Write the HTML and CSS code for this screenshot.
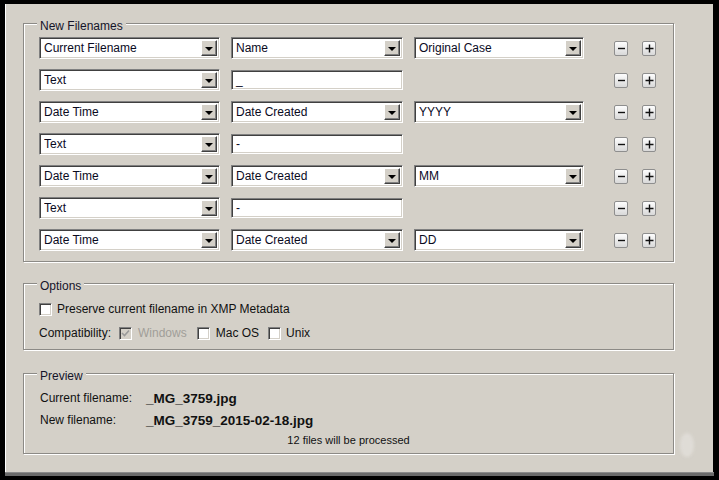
FILE: index.html
```html
<!DOCTYPE html>
<html lang="en">
<head>
  <meta charset="UTF-8">
  <title>Batch Rename</title>
  <link rel="stylesheet" href="styles.css">
</head>
<body>
<div class="window">
  <fieldset class="group names">
    <legend>New Filenames</legend>
    <div class="rows">
      <div class="row">
        <div class="select"><span class="val">Current Filename</span><span class="arrow"></span></div>
        <div class="select"><span class="val">Name</span><span class="arrow"></span></div>
        <div class="select"><span class="val">Original Case</span><span class="arrow"></span></div>
        <button class="mini minus"><svg width="9" height="9"><path d="M1 4.5h7" stroke="#111" stroke-width="1.4"/></svg></button>
        <button class="mini plus"><svg width="9" height="9"><path d="M0.5 4.5h8M4.5 0.5v8" stroke="#111" stroke-width="1.4"/></svg></button>
      </div>
      <div class="row">
        <div class="select"><span class="val">Text</span><span class="arrow"></span></div>
        <div class="input">_</div>
        <div class="blank"></div>
        <button class="mini minus"><svg width="9" height="9"><path d="M1 4.5h7" stroke="#111" stroke-width="1.4"/></svg></button>
        <button class="mini plus"><svg width="9" height="9"><path d="M0.5 4.5h8M4.5 0.5v8" stroke="#111" stroke-width="1.4"/></svg></button>
      </div>
      <div class="row">
        <div class="select"><span class="val">Date Time</span><span class="arrow"></span></div>
        <div class="select"><span class="val">Date Created</span><span class="arrow"></span></div>
        <div class="select"><span class="val">YYYY</span><span class="arrow"></span></div>
        <button class="mini minus"><svg width="9" height="9"><path d="M1 4.5h7" stroke="#111" stroke-width="1.4"/></svg></button>
        <button class="mini plus"><svg width="9" height="9"><path d="M0.5 4.5h8M4.5 0.5v8" stroke="#111" stroke-width="1.4"/></svg></button>
      </div>
      <div class="row">
        <div class="select"><span class="val">Text</span><span class="arrow"></span></div>
        <div class="input">-</div>
        <div class="blank"></div>
        <button class="mini minus"><svg width="9" height="9"><path d="M1 4.5h7" stroke="#111" stroke-width="1.4"/></svg></button>
        <button class="mini plus"><svg width="9" height="9"><path d="M0.5 4.5h8M4.5 0.5v8" stroke="#111" stroke-width="1.4"/></svg></button>
      </div>
      <div class="row">
        <div class="select"><span class="val">Date Time</span><span class="arrow"></span></div>
        <div class="select"><span class="val">Date Created</span><span class="arrow"></span></div>
        <div class="select"><span class="val">MM</span><span class="arrow"></span></div>
        <button class="mini minus"><svg width="9" height="9"><path d="M1 4.5h7" stroke="#111" stroke-width="1.4"/></svg></button>
        <button class="mini plus"><svg width="9" height="9"><path d="M0.5 4.5h8M4.5 0.5v8" stroke="#111" stroke-width="1.4"/></svg></button>
      </div>
      <div class="row">
        <div class="select"><span class="val">Text</span><span class="arrow"></span></div>
        <div class="input">-</div>
        <div class="blank"></div>
        <button class="mini minus"><svg width="9" height="9"><path d="M1 4.5h7" stroke="#111" stroke-width="1.4"/></svg></button>
        <button class="mini plus"><svg width="9" height="9"><path d="M0.5 4.5h8M4.5 0.5v8" stroke="#111" stroke-width="1.4"/></svg></button>
      </div>
      <div class="row">
        <div class="select"><span class="val">Date Time</span><span class="arrow"></span></div>
        <div class="select"><span class="val">Date Created</span><span class="arrow"></span></div>
        <div class="select"><span class="val">DD</span><span class="arrow"></span></div>
        <button class="mini minus"><svg width="9" height="9"><path d="M1 4.5h7" stroke="#111" stroke-width="1.4"/></svg></button>
        <button class="mini plus"><svg width="9" height="9"><path d="M0.5 4.5h8M4.5 0.5v8" stroke="#111" stroke-width="1.4"/></svg></button>
      </div>
    </div>
  </fieldset>

  <fieldset class="group options">
    <legend>Options</legend>
    <div class="opt-line">
      <span class="check first"></span>
      <span>Preserve current filename in XMP Metadata</span>
    </div>
    <div class="opt-line">
      <span class="compat-label">Compatibility:</span>
      <span class="check disabled"><svg width="9" height="9"><path d="M1 4l2.5 2.5L8 1.5" fill="none" stroke="#9a9a9a" stroke-width="1.6"/></svg></span>
      <span class="dim">Windows</span>
      <span class="check"></span>
      <span class="mac">Mac OS</span>
      <span class="check last"></span>
      <span>Unix</span>
    </div>
  </fieldset>

  <fieldset class="group preview">
    <legend>Preview</legend>
    <div class="pv-line"><span class="pv-label">Current filename:</span><b>_MG_3759.jpg</b></div>
    <div class="pv-line"><span class="pv-label">New filename:</span><b>_MG_3759_2015-02-18.jpg</b></div>
    <div class="pv-count">12 files will be processed</div>
  </fieldset>

  <div class="smudge"></div>
</div>
<div class="bottom-edge"></div>
</body>
</html>
```

FILE: styles.css
```css
html, body {
  margin: 0;
  padding: 0;
  background: #000;
  font-family: "Liberation Sans", Arial, sans-serif;
  font-size: 12px;
  color: #111;
}
body {
  width: 719px;
  height: 480px;
  overflow: hidden;
}
.window {
  position: relative;
  box-sizing: border-box;
  margin: 4px 0 0 5px;
  width: 708px;
  height: 468px;
  background: #d4d0c8;
  border-left: 1px solid #fff;
  padding: 9px 0 0 17px;
}
.bottom-edge {
  margin-left: 5px;
  width: 709px;
  height: 3px;
  background: #6a6a6a;
  border-top: 1px solid #8a8a8a;
}

/* etched group boxes */
.group {
  box-sizing: border-box;
  width: 651px;
  margin: 0;
  padding: 0 0 0 15px;
  border: 1px solid #8c8a86;
  box-shadow: inset 1px 1px 0 #fff, 1px 1px 0 #fff;
}
.group legend {
  margin-left: -2px;
  padding: 6px 3px 0;
  line-height: 14px;
  background: linear-gradient(transparent 9px, #d4d0c8 9px);
  color: #14142a;
}
.names { padding-top: 4px; padding-bottom: 10px; }
.options { margin-top: 11px; padding-top: 8px; padding-bottom: 8px; }
.preview { margin-top: 13px; padding-top: 7px; padding-bottom: 5px; padding-left: 16px; }
.preview legend { margin-left: -3px; }

/* filename rows */
.rows {
  display: flex;
  flex-direction: column;
  gap: 10px;
}
.row {
  display: flex;
  align-items: center;
  gap: 11px;
  height: 22px;
}
.row > :nth-child(1) { width: 181px; }
.row > :nth-child(2) { width: 172px; }
.row > :nth-child(3) { width: 170px; }
.blank { height: 20px; }
.select {
  box-sizing: border-box;
  height: 22px;
  display: flex;
  align-items: center;
  background: #fff;
  border: 1px solid;
  border-color: #808080 #fff #fff #808080;
  box-shadow: inset 1px 1px 0 #404040, inset -1px -1px 0 #d4d0c8;
  padding: 2px 2px 2px 4px;
}
.select .val {
  flex: 1;
  color: #0a0a1e;
  white-space: nowrap;
  overflow: hidden;
}
.select .arrow {
  box-sizing: border-box;
  width: 16px;
  height: 16px;
  background: #d4d0c8;
  border: 1px solid;
  border-color: #fff #404040 #404040 #fff;
  box-shadow: inset -1px -1px 0 #808080;
  display: flex;
  align-items: center;
  justify-content: center;
}
.select .arrow::after {
  content: "";
  border-left: 4px solid transparent;
  border-right: 4px solid transparent;
  border-top: 4px solid #000;
  margin: 1px 1px 0 0;
}
.input {
  box-sizing: border-box;
  height: 20px;
  background: #fff;
  border: 1px solid;
  border-color: #808080 #fff #fff #808080;
  box-shadow: inset 1px 1px 0 #404040, inset -1px -1px 0 #d4d0c8;
  padding: 2px 4px;
  line-height: 15px;
  color: #0a0a1e;
}
.mini {
  box-sizing: border-box;
  width: 14px;
  height: 15px;
  padding: 0;
  display: flex;
  align-items: center;
  justify-content: center;
  border: 1px solid #8e8e8e;
  border-radius: 2px;
  background: linear-gradient(#fdfdfd, #d9d9d9);
}
.mini.minus { margin-left: 19px; }
.mini.plus { margin-left: 3px; }

/* options */
.opt-line {
  display: flex;
  align-items: center;
  height: 16px;
  white-space: nowrap;
}
.opt-line + .opt-line { margin-top: 8px; }
.check {
  box-sizing: border-box;
  width: 13px;
  height: 13px;
  margin-right: 6px;
  background: #fff;
  border: 1px solid;
  border-color: #808080 #fff #fff #808080;
  box-shadow: inset 1px 1px 0 #404040, inset -1px -1px 0 #d4d0c8;
  display: flex;
  align-items: center;
  justify-content: center;
}
.check.first { margin-right: 5px; }
.check.last { margin-right: 5px; }
.check.disabled { background: #d4d0c8; }
.compat-label { margin-right: 8px; }
.dim { color: #a19e98; margin-right: 10px; }
.mac { margin-right: 9px; }

/* preview */
.pv-line {
  display: flex;
  align-items: center;
  height: 16px;
}
.pv-line + .pv-line { margin-top: 6px; }
.pv-label { width: 106px; }
.pv-line b { font-size: 13.5px; }
.pv-count {
  margin-top: 4px;
  margin-left: -16px;
  height: 16px;
  line-height: 16px;
  font-size: 11px;
  text-align: center;
}

.smudge {
  position: absolute;
  left: 674px;
  top: 429px;
  width: 14px;
  height: 24px;
  border-radius: 50%;
  background: #e2dfda;
  filter: blur(1.5px);
  opacity: 0.8;
}
```
